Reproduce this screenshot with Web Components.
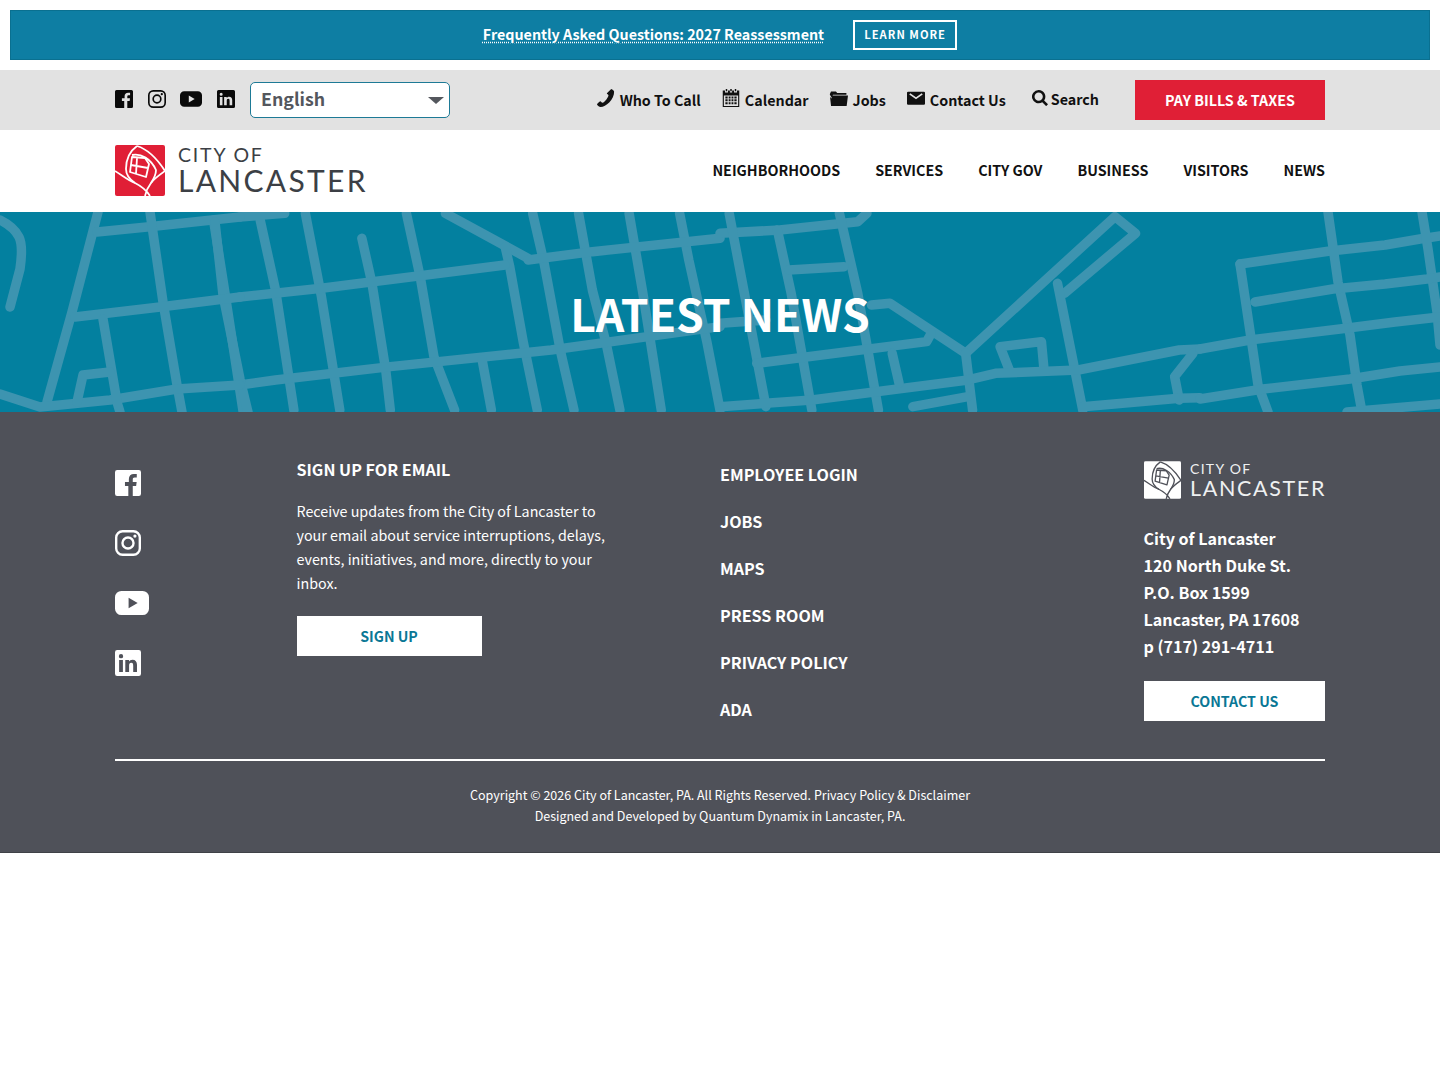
<!doctype html>
<html lang="en"><head><meta charset="utf-8"><title>Latest News | City of Lancaster</title>
<style>
html,body{margin:0;padding:0;background:#fff}
body{font-family:"Noto Sans CJK SC","Noto Sans",sans-serif;color:#111}
city-page{display:block}
</style></head><body>
<city-page>
  <city-banner href="#" label="Frequently Asked Questions: 2027 Reassessment" cta="LEARN MORE"></city-banner>
  <city-utility></city-utility>
  <city-nav></city-nav>
  <city-hero>LATEST NEWS</city-hero>
  <city-footer></city-footer>
</city-page>
<script>
const ICONS={
 facebook:'<path fill-rule="evenodd" d="M2 0h20a2 2 0 0 1 2 2v20a2 2 0 0 1-2 2h-5.600v-9.300h3.100l.5-3.600h-3.600V8.800c0-1 .3-1.800 1.800-1.800h1.900V3.800c-.4 0-1.500-.15-2.700-.15-2.800 0-4.600 1.700-4.600 4.700v2.800H9.200v3.600h3.100V24H2a2 2 0 0 1-2-2V2a2 2 0 0 1 2-2z"/>',
 instagram:'<path fill-rule="evenodd" d="M7 0h10a7 7 0 0 1 7 7v10a7 7 0 0 1-7 7H7a7 7 0 0 1-7-7V7a7 7 0 0 1 7-7zm0 2.200A4.800 4.800 0 0 0 2.200 7v10A4.800 4.800 0 0 0 7 21.800h10a4.800 4.800 0 0 0 4.800-4.800V7A4.800 4.800 0 0 0 17 2.200H7zM12 5.800a6.200 6.200 0 1 1 0 12.400 6.200 6.200 0 0 1 0-12.400zm0 2.200a4 4 0 1 0 0 8 4 4 0 0 0 0-8zm6.400-3.900a1.500 1.500 0 1 1 0 3 1.500 1.500 0 0 1 0-3z"/>',
 youtube:'<path fill-rule="evenodd" d="M4.500 3.500h15A4.500 4.500 0 0 1 24 8v8a4.500 4.500 0 0 1-4.500 4.500h-15A4.500 4.500 0 0 1 0 16V8a4.500 4.500 0 0 1 4.500-4.500zM9.600 8.300v7.400l6.400-3.700-6.400-3.700z"/>',
 linkedin:'<path fill-rule="evenodd" d="M2 0h20a2 2 0 0 1 2 2v20a2 2 0 0 1-2 2H2a2 2 0 0 1-2-2V2a2 2 0 0 1 2-2zm1.800 9.200v11h3.500v-11H3.800zM5.550 3.700a2 2 0 1 0 0 4 2 2 0 0 0 0-4zM9.500 9.200v11H13v-5.800c0-1.600.5-2.700 2-2.700s1.800 1.200 1.800 2.800v5.700h3.500v-6.500c0-3-1.400-4.800-4.100-4.800-1.700 0-2.700.9-3.200 1.800V9.200H9.500z"/>',
 phone:'<path d="M19.500 0c1.800 1.100 3 2.300 3.300 3.400.3 5-2.500 10.500-6.500 14.500-3.600 3.700-8 6-11.500 6-1.800-.2-3.700-1.600-4.800-3.300 0-.6 3.300-4.300 4.400-4.400.8 0 1.800 2 2.800 2.100 1.400-.3 4.400-3 5.600-4.800 1.300-1.800 2.600-4.300 2.500-5.200-.2-.9-2-1.500-2.200-2.300C13.900 4.800 18.700 0 19.500 0z"/>',
 calendar:'<path fill-rule="evenodd" d="M5 0h2v3H5zM11 0h2v3h-2zM17 0h2v3h-2zM1 2h3v2.500h4V2h2.500v2.500h3V2H16v2.500h4V2h3v22H1V2zm1.500 6.500v14h19v-14h-19zm2 1.500h3v2.500h-3zm4.400 0h2.500v2.500H8.900zm3.800 0h2.500v2.500h-2.500zm3.800 0h3v2.500h-3zM4.500 13.800h3v2.500h-3zm4.400 0h2.500v2.500H8.900zm3.800 0h2.500v2.500h-2.500zm3.800 0h3v2.500h-3zM4.500 17.700h3v2.500h-3zm4.400 0h2.500v2.500H8.900zm3.800 0h2.500v2.500h-2.500zm3.800 0h3v2.500h-3z"/>',
 folder:'<path d="M1 6.500 2.500 3.300h6.300L10.300 5H22v2.200H5L3.500 11 1.500 8zM4.700 8.300H24l-1.700 13.200H2.600L1.300 9.800 3 12z"/>',
 mail:'<path d="M1.500 3.500h21A1.500 1.500 0 0 1 24 5v14.500a1.500 1.500 0 0 1-1.500 1.500h-21A1.500 1.500 0 0 1 0 19.500V5a1.500 1.500 0 0 1 1.500-1.500zM3 7.200 12 13.500l9-6.300-1.400-1.500L12 11 4.400 5.700z" fill-rule="evenodd"/>',
 search:'<path fill-rule="evenodd" d="M10 0a10 10 0 0 1 8.200 15.700l5.800 5.800-2.800 2.700-5.800-5.800A10 10 0 1 1 10 0zm0 3.800a6.200 6.200 0 1 0 0 12.400 6.200 6.200 0 0 0 0-12.400z"/>'
};
const ROSE=`<rect width="50" height="51" rx="2" fill="var(--tile)"/>
<g fill="none" stroke="var(--line)" stroke-width="1.800" stroke-linejoin="round" stroke-linecap="butt">
<path d="M0 26C8 31 14 36 20 38 26 41 32 46 35 51M50 26C43 31 38 35 36 38 33 42 31 46 30 51"/>
<path d="M22 1C15 6 11 14 11 24 11 30 14 34 20 38M22 1C32 4 41 12 50 26"/>
<path d="M17 10C26 8 36 14 41 25 41 30 38 35 36 38"/>
<path d="M15 27 17 12 30 13 34 19 31 32ZM22 13 21 29M16 20 33 23"/>
</g>`;
const FONT='"Noto Sans CJK SC","Noto Sans",sans-serif';
function define(tag,css,html){
  customElements.define(tag,class extends HTMLElement{
    constructor(){super();const r=this.attachShadow({mode:'open'});
      r.innerHTML=`<style>${css}</style>`+(typeof html==='function'?html(this):html);}
  });
}
define('c-icon',':host{display:inline-block;line-height:0;width:var(--s,16px);height:var(--s,16px);color:inherit}svg{width:100%;height:100%;display:block;fill:currentColor}',
  el=>`<svg viewBox="0 0 24 24" aria-hidden="true">${ICONS[el.getAttribute('name')]||''}</svg>`);
define('c-logo',`:host{display:flex;align-items:center;--tile:#e01f36;--line:#fff;--ink:#3c3f45;color:var(--ink)}
 svg{display:block;width:50px;height:51px;flex:none}
 .t{margin-left:13px;font-family:Lato,sans-serif;font-weight:400;line-height:1;white-space:nowrap;position:relative;top:-1px}
 .a{display:block;font-size:19.500px;letter-spacing:1.800px;height:22px;line-height:22px}
 .b{display:block;font-size:30px;letter-spacing:2.300px;height:28px;line-height:28px}`,
 `<svg viewBox="0 0 50 51">${ROSE}</svg><div class="t"><span class="a">CITY OF</span><span class="b">LANCASTER</span></div>`);

define('city-banner',`:host{display:block;margin:10px;font-family:${FONT}}
 .b{height:50px;box-sizing:border-box;background:#0e7ea3;border:1px solid #0a7090;display:flex;align-items:center;justify-content:center;gap:29px}
 a{color:#fff;font-size:14.300px;font-weight:700;line-height:24px;text-decoration:underline dotted;text-underline-offset:2px;white-space:nowrap;position:relative;top:-1px}
 .c{box-sizing:border-box;width:104px;height:30px;border:2px solid #fff;color:#fff;font-size:11.200px;font-weight:700;letter-spacing:1px;display:flex;align-items:center;justify-content:center;line-height:1}`,
 el=>`<div class="b"><a href="#">${el.getAttribute('label')}</a><span class="c">${el.getAttribute('cta')}</span></div>`);

define('city-utility',`:host{display:block;background:#e2e2e2;height:60px;font-family:${FONT}}
 .w{width:1210px;height:60px;margin:0 auto;display:flex;align-items:center}
 .soc{display:flex;align-items:center;color:#0a0a0a;position:relative;top:-1px}
 .soc c-icon{--s:18px}
 .soc c-icon+c-icon{margin-left:14.500px}
 .soc c-icon[name=youtube]{--s:22px}
 .sel{box-sizing:border-box;width:200px;height:36px;margin-left:15.500px;background:#fff;border:1px solid #1d7a96;border-radius:5px;display:flex;align-items:center;justify-content:space-between;padding:0 5px 0 10px;color:#54575d;font-size:17.800px;font-weight:700;line-height:1}
 .sel span{position:relative;top:-1px}
 .sel i{width:0;height:0;border:8px solid transparent;border-top:7px solid #54575d;border-bottom:0;display:block}
 .links{margin-left:auto;display:flex;align-items:center;font-size:14.300px;font-weight:700;color:#111;line-height:20px}
 .links span{display:flex;align-items:center;white-space:nowrap}
 .links c-icon{--s:18px;margin-right:5px;position:relative;top:-2px}
 .links .s{position:relative;top:-1px}
 .pay{box-sizing:border-box;width:190px;height:40px;margin-left:36px;background:#e01f36;color:#fff;font-size:14.300px;font-weight:700;display:flex;align-items:center;justify-content:center;line-height:1}`,
 `<div class="w"><div class="soc"><c-icon name="facebook"></c-icon><c-icon name="instagram"></c-icon><c-icon name="youtube"></c-icon><c-icon name="linkedin"></c-icon></div>
 <div class="sel"><span>English</span><i></i></div>
 <div class="links">
  <span><c-icon name="phone"></c-icon>Who To Call</span>
  <span style="margin-left:21px"><c-icon name="calendar"></c-icon>Calendar</span>
  <span style="margin-left:20px"><c-icon name="folder" style="--s:19px"></c-icon>Jobs</span>
  <span style="margin-left:21px"><c-icon name="mail"></c-icon>Contact Us</span>
  <span class="s" style="margin-left:26px"><c-icon name="search" style="--s:16px;margin-right:3px;top:-1px"></c-icon>Search</span>
 </div>
 <div class="pay">PAY BILLS &amp; TAXES</div></div>`);

define('city-nav',`:host{display:block;background:#fff;height:82px;font-family:${FONT}}
 .w{width:1210px;height:82px;margin:0 auto;display:flex;align-items:center;justify-content:space-between}
 c-logo{position:relative;top:-1px}
 nav{display:flex;gap:35px;font-size:14.300px;font-weight:700;color:#111;line-height:20px;position:relative;top:-1px}`,
 `<div class="w"><c-logo></c-logo><nav><span>NEIGHBORHOODS</span><span>SERVICES</span><span>CITY GOV</span><span>BUSINESS</span><span>VISITORS</span><span>NEWS</span></nav></div>`);

const S=['M465 30 490 250 530 610','M565 20 600 240 640 600','M665 10 700 260 740 600','M788 85 810 220 840 480 850 600','M885 10 915 200 945 440 990 600','M970 10 1150 145','M1100 110 1110 170 1140 400 1170 600','M1160 10 1185 160 1220 420 1250 600','M1260 10 1290 240 1320 400 1350 600','M1370 10 1400 250 1440 600','M1480 10 1500 150 1540 400 1568 600','M522 261 700 235 1100 165','M522 525 600 510 850 470 1200 420 1568 350','M522 21 620 10','M1150 150 1290 125 1568 85','M1050 450 1070 600'];
const R=['M0 70 130 60 300 35 320 10','M260 10 300 250 345 600','M125 60 155 250 200 600','M20 10 60 300 100 590','M150 180 270 170','M0 340 100 330M330 285 370 280 535 430','M535 430 860 20 905 70 750 250','M735 220 790 600','M80 460 450 395 460 370','M535 430 550 600','M610 410 700 395 705 470M610 410 630 480','M0 590 200 570 540 510 600 490 780 480 1000 420 1045 417','M375 430 390 520','M1030 430 990 500 1000 570','M790 590 1000 565 1045 563','M420 590 540 560'];
const A=['M0 8C8 12 15 17 19 25 23 33 21 50 20 57L10 95','M98 0 72 100 47 190','M97 20 147 15 240 5','M150 0 163 90 177 173 182 200','M215 10 223 83 240 167 248 200','M75 105 160 95 240 85','M0 182 40 195 110 188 177 177 240 173','M103 107 117 190 120 200','M77 190 83 163 110 160',
 'M1240 52 1330 39 1385 33 1420 27 1440 24','M1240 52 1258 173 1268 200','M1328 0 1338 70 1350 123 1357 173 1362 200','M1422 0 1428 37 1437 100 1440 133','M1255 90 1333 77 1385 72 1427 67 1440 65','M1200 137 1250 128 1340 117 1395 110 1440 105','M1200 187 1263 177 1350 167 1400 159 1440 155','M1347 200 1440 192'];
const p=a=>a.map(d=>`<path vector-effect="non-scaling-stroke" d="${d}"/>`).join('');
define('city-hero',`:host{display:block;position:relative;height:200px;background:#03809f;overflow:hidden;font-family:${FONT}}
 svg{position:absolute;inset:0;width:100%;height:100%}
 .t{position:relative;height:100%;display:flex;align-items:center;justify-content:center;color:#fff;font-size:44.500px;font-weight:700;line-height:1;padding-top:2px;box-sizing:border-box}
 g{fill:none;stroke:#3d94b0;stroke-width:9.500;stroke-linejoin:round;stroke-linecap:round}`,
 `<svg viewBox="0 0 1440 200" preserveAspectRatio="none"><g transform="translate(0 -2) scale(.4592 .3333)">${p(S)}</g><g transform="translate(720 -2) scale(.4592 .3333)">${p(R)}</g><g>${p(A)}</g></svg><div class="t"><slot></slot></div>`);

define('city-footer',`:host{display:block;background:#4f5159;color:#fff;height:441px;box-sizing:border-box;font-family:${FONT};border-bottom:1px solid #3f4147}
 .w{width:1210px;margin:0 auto;box-sizing:border-box;height:440px;padding-top:45px;display:flex;flex-direction:column}
 .g{display:grid;grid-template-columns:181.500px 423.500px 424px 181px;height:302px}
 .soc{display:flex;flex-direction:column;gap:34px;padding-top:13px}
 .soc c-icon{--s:26px;display:block}
 .soc c-icon[name=youtube]{--s:34px;margin:-4px 0;}
 h3{margin:0;font-size:16.100px;font-weight:700;line-height:24px}
 p{margin:18px 0 0;font-size:14.300px;line-height:24px;font-weight:400;width:320px}
 .btn{box-sizing:border-box;height:40px;background:#fff;color:#0a7795;font-size:14.200px;font-weight:700;display:flex;align-items:center;justify-content:center;line-height:1}
 .su{width:185px;margin-top:21px}
 .ln{display:flex;flex-direction:column;gap:23px;font-size:16.100px;font-weight:700;line-height:24px;padding-top:5px}
 .logo{--tile:#fff;--line:#4f5159;display:flex;align-items:center;height:38px;margin-top:4px}
 .logo svg{width:37px;height:38px;display:block;flex:none}
 .logo .t{margin-left:9px;font-family:Lato,sans-serif;white-space:nowrap;color:#eef0f1}
 .logo .a{display:block;font-size:14px;letter-spacing:1.300px;line-height:16px;height:16px}
 .logo .b{display:block;font-size:21.500px;letter-spacing:1.650px;line-height:22px;height:22px}
 .ad{margin-top:26px;margin-left:-.500px;font-size:16.100px;font-weight:700;line-height:27px}
 .cu{margin-top:21px}
 hr{margin:0;border:0;height:2px;background:#fff;flex:none}
 .c{text-align:center;font-size:12.500px;line-height:21px;margin-top:23px}`,
 `<div class="w"><div class="g">
  <div class="soc"><c-icon name="facebook"></c-icon><c-icon name="instagram"></c-icon><c-icon name="youtube"></c-icon><c-icon name="linkedin"></c-icon></div>
  <div><h3>SIGN UP FOR EMAIL</h3><p>Receive updates from the City of Lancaster to your email about service interruptions, delays, events, initiatives, and more, directly to your inbox.</p><div class="btn su">SIGN UP</div></div>
  <div class="ln"><span>EMPLOYEE LOGIN</span><span>JOBS</span><span>MAPS</span><span>PRESS ROOM</span><span>PRIVACY POLICY</span><span>ADA</span></div>
  <div><div class="logo"><svg viewBox="0 0 50 51">${ROSE}</svg><div class="t"><span class="a">CITY OF</span><span class="b">LANCASTER</span></div></div>
   <div class="ad">City of Lancaster<br>120 North Duke St.<br>P.O. Box 1599<br>Lancaster, PA 17608<br>p (717) 291-4711</div><div class="btn cu">CONTACT US</div></div>
 </div><hr><div class="c">Copyright © 2026 City of Lancaster, PA. All Rights Reserved. Privacy Policy &amp; Disclaimer<br>Designed and Developed by Quantum Dynamix in Lancaster, PA.</div></div>`);
</script>
</body></html>
